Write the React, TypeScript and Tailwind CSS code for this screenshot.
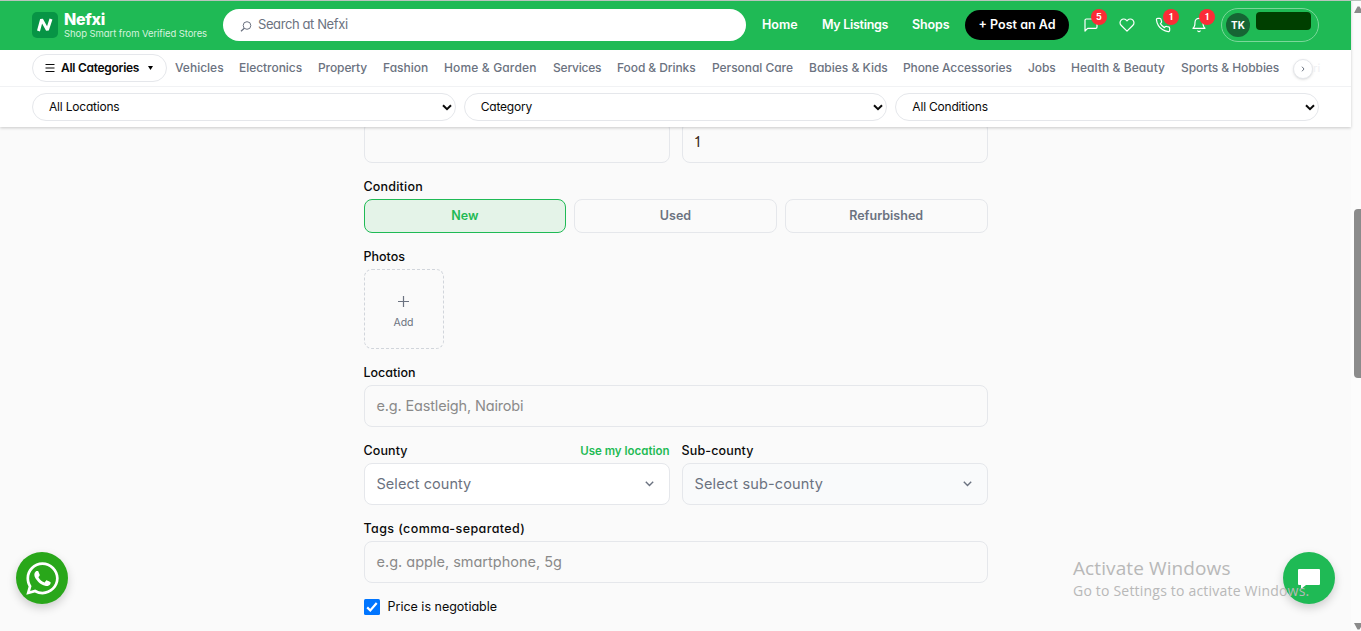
import React from "react";
import { FiBell, FiHeart, FiMessageSquare, FiPhone } from "react-icons/fi";
import { FaWhatsapp } from "react-icons/fa";

const categories = [
  { name: "Vehicles", style: "w-[48px]" },
  { name: "Electronics", style: "w-[63px] tracking-[-0.05px]" },
  { name: "Property", style: "w-[49px] tracking-[-0.1px]" },
  { name: "Fashion", style: "w-[45px]" },
  { name: "Home & Garden", style: "w-[93px] tracking-[0.15px]" },
  { name: "Services", style: "w-[48px] tracking-[-0.2px]" },
  { name: "Food & Drinks", style: "w-[79px] tracking-[-0.08px]" },
  { name: "Personal Care", style: "w-[81px] tracking-[-0.05px]" },
  { name: "Babies & Kids", style: "w-[78px]" },
  { name: "Phone Accessories", style: "w-[109px] tracking-[-0.1px]" },
  { name: "Jobs", style: "w-[27px] tracking-[-0.1px]" },
  { name: "Health & Beauty", style: "w-[94px] tracking-[0.07px]" },
  { name: "Sports & Hobbies", style: "w-[99px] tracking-[-0.08px]" },
];

const filters = ["All Locations", "Category", "All Conditions"];

const actions = [
  { id: "chat", Icon: FiMessageSquare, count: 5 },
  { id: "saved", Icon: FiHeart, count: 0 },
  { id: "calls", Icon: FiPhone, count: 1 },
  { id: "alerts", Icon: FiBell, count: 1 },
];

function Logo() {
  return (
    <div className="flex w-[191px] shrink-0 items-center gap-1.5">
      <svg width="26" height="26" viewBox="0 0 26 26" className="shrink-0">
        <rect width="26" height="26" rx="5" fill="#079445" />
        <path
          d="M6.5 19 L9.6 7.5 L15.4 18 L19 7"
          fill="none"
          stroke="#fff"
          strokeWidth="3"
          strokeLinejoin="bevel"
        />
      </svg>
      <div className="whitespace-nowrap text-white">
        <div className="text-[16px] leading-[17px] font-extrabold tracking-[-0.3px]">Nefxi</div>
        <div className="text-[9.5px] leading-[11px] tracking-[-0.08px] text-[#d5f3df]">
          Shop Smart from Verified Stores
        </div>
      </div>
    </div>
  );
}

function Header() {
  return (
    <header className="flex h-[50px] items-center border-t border-[#b9c4bd] bg-[#1fba55] px-8 pb-px">
      <Logo />
      <div className="flex h-8 w-[523px] items-center rounded-full bg-white pl-[17px] text-[13px] text-[#6b7280]">
        <svg width="12" height="12" viewBox="0 0 12 12" fill="none" stroke="#6b7280" className="mt-[2px] mr-[6px]">
          <circle cx="7" cy="5.5" r="3.8" />
          <path d="M4.3 8.3 L1 11.3" strokeWidth="1.3" />
        </svg>
        <span className="tracking-[-0.4px]">Search at Nefxi</span>
      </div>
      <nav className="flex items-center text-[12.5px] font-semibold whitespace-nowrap text-white">
        <a className="ml-4 w-[60px]">Home</a>
        <a className="w-[90px] tracking-[-0.3px]">My Listings</a>
        <a className="w-[53px] tracking-[-0.1px]">Shops</a>
        <a className="flex h-[30px] w-[104px] items-center justify-center rounded-full bg-black">
          + Post an Ad
        </a>
      </nav>
      <div className="ml-1 flex">
        {actions.map(({ id, Icon, count }) => (
          <div key={id} className="relative flex h-9 w-9 items-center justify-center text-white">
            <Icon size={16} strokeWidth={1.8} />
            {count > 0 && (
              <span className="absolute top-[2px] right-[2px] flex h-4 w-4 items-center justify-center rounded-full bg-[#fb2c36] text-[9px] font-bold">
                {count}
              </span>
            )}
          </div>
        ))}
      </div>
      <div className="ml-1 flex h-[34px] w-[98px] items-center rounded-full border border-[#7bd79a] pl-1">
        <span className="flex h-6 w-6 items-center justify-center rounded-full bg-[#166534] text-[10px] font-bold text-white">
          TK
        </span>
        <span className="mb-2 ml-1.5 h-[18px] w-[55px] rounded-sm bg-[#003f00]" />
      </div>
    </header>
  );
}

function CategoryBar() {
  return (
    <div className="flex h-[37px] items-center border-b border-[#f1f2f4] bg-white px-8">
      <button className="flex h-7 w-[135px] shrink-0 items-center rounded-full border border-[#e5e7eb] pl-3 text-[12px] font-semibold whitespace-nowrap text-[#0a0a0a]">
        <svg width="10" height="10" viewBox="0 0 10 10" stroke="#0a0a0a" className="mr-[6px]">
          <path d="M0.5 1.5h9M0.5 5h9M0.5 8.5h9" />
        </svg>
        <span className="w-[79px] text-left tracking-[-0.28px]">All Categories</span>
        <svg width="5" height="4" viewBox="0 0 5 4" className="ml-[8px]">
          <path d="M0 0h5L2.5 4z" />
        </svg>
      </button>
      <div className="ml-2 flex gap-4 text-[12px] font-medium whitespace-nowrap text-[#6b7280]">
        {categories.map((c) => (
          <a key={c.name} className={c.style}>
            {c.name}
          </a>
        ))}
      </div>
      <button className="mt-px ml-[13px] flex h-5 w-5 shrink-0 items-center justify-center rounded-full border border-[#e5e7eb] bg-white shadow-sm">
        <svg width="4" height="6" viewBox="0 0 4 6" fill="none" stroke="#6b7280">
          <path d="M1 0.7L3 3L1 5.3" />
        </svg>
      </button>
      <span className="text-[11px] font-medium text-[#f1f2f4]">ri</span>
    </div>
  );
}

function FilterBar() {
  return (
    <div className="flex h-10 items-center gap-2 bg-white px-8">
      {filters.map((f) => (
        <div
          key={f}
          className="flex h-7 flex-1 items-center justify-between rounded-full border border-[#e5e7eb] pr-[3px] pl-4 text-[12px] text-[#0a0a0a]"
        >
          <span className="tracking-[-0.2px]">{f}</span>
          <svg width="10" height="7" viewBox="0 0 10 7" fill="none" stroke="#0a0a0a" strokeWidth="2">
            <path d="M1 1.2L5 5.2L9 1.2" />
          </svg>
        </div>
      ))}
    </div>
  );
}

function Label({ children, className = "" }: { children: React.ReactNode; className?: string }) {
  return <div className={`mb-1 text-[12.5px] leading-4 font-medium text-[#0a0a0a] ${className}`}>{children}</div>;
}

function Select({ text, className }: { text: string; className: string }) {
  return (
    <div
      className={`flex h-[42px] items-center justify-between rounded-lg border border-[#e5e7eb] pr-[15px] pl-3 text-[14.5px] text-[#6b7280] ${className}`}
    >
      <span>{text}</span>
      <svg width="9" height="6" viewBox="0 0 9 6" fill="none" stroke="#6b7280" strokeWidth="1.4">
        <path d="M0.8 0.8L4.5 4.5L8.2 0.8" />
      </svg>
    </div>
  );
}

function ListingForm() {
  const input = "flex h-[42px] items-center rounded-lg border border-[#e5e7eb] px-3 text-[14.5px] text-[#8a8a8a]";
  const option = "flex h-[34px] items-center justify-center rounded-lg border text-[12.5px] font-semibold";

  return (
    <div className="mx-auto -mt-[6px] flex w-[624px] flex-col gap-4">
      <div className="grid grid-cols-2 gap-3">
        <div className={input} />
        <div className={input}>
          <span className="text-[#3b2a1a]">1</span>
        </div>
      </div>
      <div>
        <Label className="tracking-[0.2px]">Condition</Label>
        <div className="grid grid-cols-3 gap-2">
          <div className={`${option} border-[#1fba55] bg-[#e4f3e8] text-[#1fba55]`}>New</div>
          <div className={`${option} border-[#e5e7eb] text-[#6b7280]`}>Used</div>
          <div className={`${option} border-[#e5e7eb] text-[#6b7280]`}>Refurbished</div>
        </div>
      </div>
      <div>
        <Label>Photos</Label>
        <div className="flex h-20 w-20 flex-col items-center justify-center rounded-lg border border-dashed border-[#d1d5db] text-[#6b7280]">
          <svg width="11" height="11" viewBox="0 0 11 11" stroke="#6b7280" strokeWidth="1.2" className="mt-[8px]">
            <path d="M5.5 0v11M0 5.5h11" />
          </svg>
          <span className="mt-[8px] text-[10.5px] leading-4">Add</span>
        </div>
      </div>
      <div>
        <Label>Location</Label>
        <div className={`${input} tracking-[-0.16px]`}>e.g. Eastleigh, Nairobi</div>
      </div>
      <div className="grid grid-cols-2 gap-3">
        <div>
          <div className="flex justify-between">
            <Label className="tracking-[0.1px]">County</Label>
            <a className="text-[11.5px] leading-4 font-semibold text-[#1fba55]">Use my location</a>
          </div>
          <Select text="Select county" className="bg-white tracking-[0.05px]" />
        </div>
        <div>
          <Label className="tracking-[0.15px]">Sub-county</Label>
          <Select text="Select sub-county" className="bg-[#f9fafb] tracking-[0.15px]" />
        </div>
      </div>
      <div>
        <Label className="tracking-[0.4px]">Tags (comma-separated)</Label>
        <div className={input}>e.g. apple, smartphone, 5g</div>
      </div>
      <div className="flex items-center gap-2 text-[12.5px] leading-4 text-[#0a0a0a]">
        <svg width="16" height="16" viewBox="0 0 16 16">
          <rect width="16" height="16" rx="1.5" fill="#0075ff" />
          <path d="M3.2 8.4L6.3 11.5L12.7 4" fill="none" stroke="#fff" strokeWidth="2.2" />
        </svg>
        Price is negotiable
      </div>
    </div>
  );
}

export default function App() {
  return (
    <div className="relative flex h-[631px] w-[1361px] overflow-hidden bg-[#fafafa] font-['Inter',sans-serif] [font-feature-settings:'cv11','cv01']">
      <div className="flex w-[1351px] flex-col">
        <div className="z-10 shadow-[0_1px_3px_rgba(0,0,0,0.2)]">
          <Header />
          <CategoryBar />
          <FilterBar />
        </div>
        <main className="flex-1 overflow-hidden">
          <ListingForm />
        </main>
      </div>

      <div className="flex w-[10px] flex-col items-end justify-between border-t border-[#b9c4bd] bg-[#fcfcfc]">
        <svg width="7" height="7" viewBox="0 0 7 7" className="mt-[5px]">
          <path d="M0 7L3.5 0.5H5.5L7 3V7z" fill="#8b8b8b" />
        </svg>
        <div className="mb-[49px] h-[169px] w-[7px] rounded-l-[4px] bg-[#8b8b8b]" />
        <svg width="7" height="7" viewBox="0 0 7 7" className="mb-[1px]">
          <path d="M0 0H7V4L5.5 6.5H3.5z" fill="#8b8b8b" />
        </svg>
      </div>

      <div className="absolute top-[552px] left-4 flex h-[52px] w-[52px] items-center justify-center rounded-full bg-[#29a71a] text-white shadow-[0_4px_10px_rgba(0,0,0,0.18)]">
        <FaWhatsapp size={37} />
      </div>
      <div className="absolute top-[552px] left-[1283px] flex h-[52px] w-[52px] items-center justify-center rounded-full bg-[#1fba55] shadow-[0_4px_10px_rgba(0,0,0,0.18)]">
        <svg width="22" height="20" viewBox="0 0 22 20" fill="#fff" className="mt-[2px]">
          <path d="M1 0h20a1 1 0 0 1 1 1v14a1 1 0 0 1-1 1H8l-5 4v-4H1a1 1 0 0 1-1-1V1a1 1 0 0 1 1-1z" />
        </svg>
      </div>
      <div className="absolute top-[556px] left-[1073px] font-['Open_Sans',sans-serif] whitespace-nowrap text-[#b8b8b8]">
        <div className="text-[19px] leading-6 tracking-[0.1px]">Activate Windows</div>
        <div className="text-[14px] leading-[22px] tracking-[0.2px]">Go to Settings to activate Windows.</div>
      </div>
    </div>
  );
}
